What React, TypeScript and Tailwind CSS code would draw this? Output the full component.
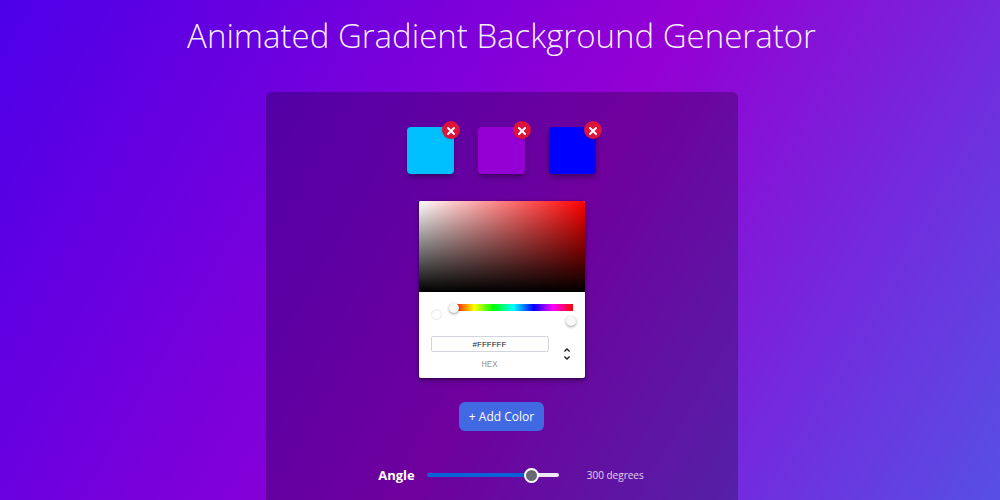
import { useState } from "react"
import { X } from "lucide-react"
import { MdUnfoldMore } from "react-icons/md"

const initialColors = ["#00bfff", "#9400d3", "#0000ff"]

type ColorSwatchProps = {
    color: string
    onRemove: () => void
}

const ColorSwatch = ({ color, onRemove }: ColorSwatchProps) => (
    <li className="relative size-[47px] rounded-sm shadow-md shadow-black/30" style={{ backgroundColor: color }}>
        <button
            type="button"
            aria-label={`Remove ${color}`}
            onClick={onRemove}
            className="absolute -top-1.5 -right-1.5 flex size-[18px] items-center justify-center rounded-full bg-[#dc143c] pt-px text-white shadow"
        >
            <X className="size-3" strokeWidth={4} />
        </button>
    </li>
)

const sliderThumb =
    "[&::-webkit-slider-thumb]:appearance-none [&::-webkit-slider-thumb]:size-[10px] [&::-webkit-slider-thumb]:rounded-full [&::-webkit-slider-thumb]:bg-[#f8f8f8] [&::-webkit-slider-thumb]:shadow-[0_1px_3px_rgba(0,0,0,0.4)]"

type ColorPickerProps = {
    hex: string
    onChange: (hex: string) => void
}

const ColorPicker = ({ hex, onChange }: ColorPickerProps) => (
    <div className="w-[166px] overflow-hidden rounded-xs bg-white shadow-[0_1px_3px_rgba(0,0,0,0.5),0_3px_6px_rgba(0,0,0,0.2)]">
        <div className="h-[91px] bg-[linear-gradient(to_top,#000,transparent),linear-gradient(to_right,#fff,#f00)]" />

        <div className="px-3 pt-3 pb-[7px]">
            <div className="flex items-center gap-3">
                <div className="size-[11px] rounded-full border border-gray-200" style={{ backgroundColor: hex }} />
                <div className="flex flex-1 flex-col gap-1.5">
                    <div className="flex h-[7px] items-center bg-[linear-gradient(to_right,#f00_0%,#ff0_17%,#0f0_33%,#0ff_50%,#00f_67%,#f0f_83%,#f00_100%)]">
                        <input
                            type="range"
                            aria-label="Hue"
                            min={0}
                            max={360}
                            defaultValue={0}
                            className={`-mx-[5px] h-[7px] w-[127px] shrink-0 appearance-none bg-transparent ${sliderThumb}`}
                        />
                    </div>
                    <div className="flex h-[7px] items-center">
                        <input
                            type="range"
                            aria-label="Alpha"
                            min={0}
                            max={100}
                            defaultValue={100}
                            className={`-mx-[5px] h-[7px] w-[127px] shrink-0 appearance-none bg-transparent ${sliderThumb}`}
                        />
                    </div>
                </div>
            </div>

            <div className="mt-3 flex items-center gap-2.5">
                <div className="flex w-[118px] shrink-0 flex-col gap-2">
                    <input
                        id="hex"
                        type="text"
                        value={hex}
                        onChange={(e) => onChange(e.target.value)}
                        className="h-4 w-full rounded-xs border border-gray-300 text-center font-['Liberation_Sans',sans-serif] text-[8px] text-[#222]"
                    />
                    <label htmlFor="hex" className="text-center font-['Liberation_Mono',monospace] text-[9px] leading-[11px] text-[#969696]">
                        HEX
                    </label>
                </div>
                <button type="button" aria-label="Change color format" className="shrink-0 text-[#222]">
                    <MdUnfoldMore className="size-4" />
                </button>
            </div>
        </div>
    </div>
)

const App = () => {
    const [colors, setColors] = useState(initialColors)
    const [hex, setHex] = useState("#FFFFFF")
    const [angle, setAngle] = useState(300)

    const handleAddColor = () => setColors([...colors, hex])

    const handleRemove = (index: number) => {
        setColors(colors.filter((_, i) => i !== index))
    }

    return (
        <main className="flex min-h-screen flex-col items-center bg-[linear-gradient(120deg,#00f_-58%,#9400d3_54%,#00bfff_165%)] pl-[3px] font-['Open_Sans',sans-serif] text-white">
            <h1 className="mt-3 text-center text-[33px] leading-[48px] font-light text-white/95">
                Animated Gradient Background Generator
            </h1>

            <section className="mt-8 flex w-full max-w-[472px] flex-1 flex-col items-center rounded-t-md bg-black/25 pt-[35px]">
                <ul className="flex gap-6">
                    {colors.map((color, idx) => (
                        <ColorSwatch key={idx} color={color} onRemove={() => handleRemove(idx)} />
                    ))}
                </ul>

                <div className="mt-[27px]">
                    <ColorPicker hex={hex} onChange={setHex} />
                </div>

                <button
                    type="button"
                    onClick={handleAddColor}
                    className="mt-6 h-[29px] rounded-md bg-[#4169e1] px-2.5 text-xs whitespace-nowrap"
                >
                    + Add Color
                </button>

                {/* Angle */}
                <div className="mt-8 flex items-center pl-10">
                    <label htmlFor="angle" className="text-[13px] leading-6 font-bold">Angle</label>
                    <input
                        id="angle"
                        type="range"
                        min={0}
                        max={360}
                        value={angle}
                        onChange={(e) => setAngle(Number(e.target.value))}
                        style={{ backgroundSize: `${(angle / 360) * 100}% 100%` }}
                        className="ml-3 h-1 w-[132px] appearance-none rounded-full bg-white/90 bg-[linear-gradient(#0b62d6,#0b62d6)] bg-no-repeat [&::-webkit-slider-thumb]:size-[15px] [&::-webkit-slider-thumb]:appearance-none [&::-webkit-slider-thumb]:rounded-full [&::-webkit-slider-thumb]:border-2 [&::-webkit-slider-thumb]:border-white [&::-webkit-slider-thumb]:bg-[#666a73]"
                    />
                    <output htmlFor="angle" className="ml-7 w-[78px] text-[10px] whitespace-nowrap text-white/80">
                        {angle} degrees
                    </output>
                </div>
            </section>
        </main>
    )
}

export default App
